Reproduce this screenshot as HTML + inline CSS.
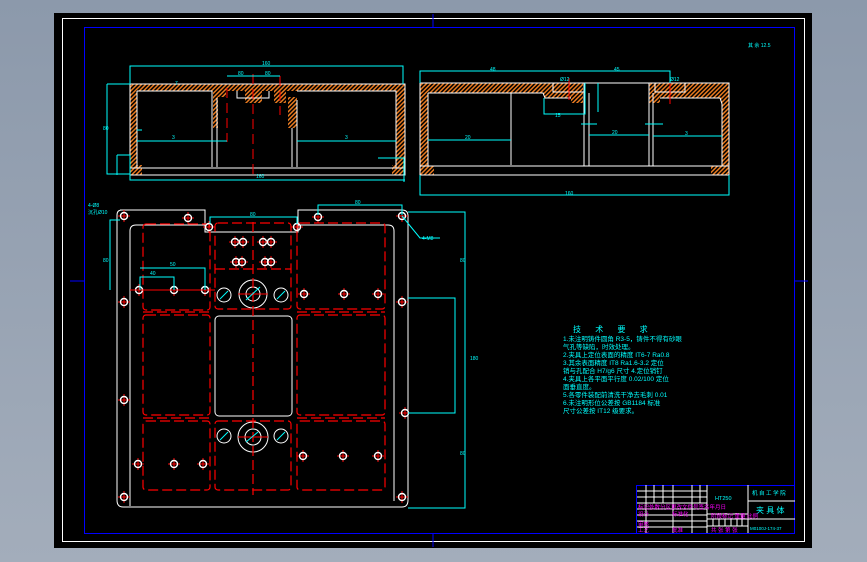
<!DOCTYPE html>
<html><head><meta charset="utf-8"><style>
html,body{margin:0;padding:0;width:867px;height:562px;overflow:hidden;background:linear-gradient(#8c99ab,#a3adbb);}
svg{position:absolute;left:0;top:0}
text{font-family:"Liberation Sans","Noto Sans CJK SC",sans-serif;}
</style></head><body>
<svg width="867" height="562" viewBox="0 0 867 562">
<defs>
<pattern id="h" width="3" height="3" patternUnits="userSpaceOnUse" patternTransform="rotate(45)">
<rect width="3" height="3" fill="#000"/><rect width="1.5" height="3" fill="#e87a20"/></pattern>
<g id="x"><line x1="-6" y1="0" x2="6" y2="0" stroke="#f00"/><line x1="0" y1="-6" x2="0" y2="6" stroke="#f00"/><circle r="3.5" fill="none" stroke="#fff" stroke-width="1.4"/></g>
</defs>
<rect x="54" y="13" width="758" height="535" fill="#000"/>
<rect x="62.5" y="18.5" width="742" height="523" fill="none" stroke="#fff"/>
<rect x="84.5" y="27.5" width="710" height="506" fill="none" stroke="#0000ff"/>
<g stroke="#00f"><line x1="433" y1="14" x2="433" y2="27"/><line x1="433" y1="534" x2="433" y2="547"/><line x1="70" y1="281" x2="84" y2="281"/><line x1="795" y1="281" x2="808" y2="281"/></g>

<!-- left section -->
<g>
<path d="M130 84 H405 V175 H130Z" fill="url(#h)"/>
<path d="M137 91 H213 V128 H218 V97 H226 V91 H245 V103 H262 V91 H274 V103 H286 V91 H297 V97 H288 V128 H297 V91 H396 V165 H137Z" fill="#000"/>
<rect x="130" y="165" width="275" height="10" fill="#000"/>
<rect x="130" y="165" width="12" height="10" fill="url(#h)"/>
<rect x="392" y="165" width="13" height="10" fill="url(#h)"/>
<g fill="none" stroke="#fff" stroke-width="1">
<path d="M130 84 H405 V175 H130Z"/>
<path d="M137 91 H212 V128 M217 128 V98 M137 91 V168 H396 V91 H297"/>
<line x1="130" y1="168" x2="405" y2="168"/>
<line x1="212" y1="128" x2="212" y2="167"/><line x1="217" y1="128" x2="217" y2="167"/>
<line x1="292" y1="128" x2="292" y2="167"/><line x1="297" y1="100" x2="297" y2="167"/>
<path d="M237 91 V98 H269 V91"/>
</g>
<g stroke="#f00" stroke-dasharray="10 5"><line x1="253" y1="74" x2="253" y2="175"/><line x1="227" y1="88" x2="227" y2="142"/><line x1="280" y1="76" x2="280" y2="115"/></g>
<g stroke="#0ff" fill="none">
<path d="M130 84 V66 H403 V84"/><path d="M107 84 V174 H130"/><path d="M107 84 H130"/>
<path d="M227 76 H280"/><path d="M137 141 H227"/><path d="M137 130 H142"/>
<path d="M117 155 H130 V180 H405"/><path d="M117 155 V175"/>
<path d="M297 141 H396"/><path d="M378 158 H404 V182"/>
</g>
<g fill="#0ff" font-size="5"><text x="262" y="65">160</text><text x="238" y="75">80</text><text x="265" y="75">80</text><text x="103" y="130">80</text><text x="256" y="178">160</text><text x="172" y="139">3</text><text x="345" y="139">3</text><text x="175" y="85">7</text></g>
</g>

<!-- right section -->
<g>
<path d="M420 83 H729 V175 H420Z" fill="url(#h)"/>
<path d="M428 93 H543 L545 98 H571 V103 H583 V83 H649 V103 H660 V98 H720 L722 104 V166 H428Z" fill="#000"/>
<rect x="420" y="166" width="309" height="9" fill="#000"/>
<rect x="420" y="166" width="14" height="9" fill="url(#h)"/>
<rect x="711" y="166" width="18" height="9" fill="url(#h)"/>
<g fill="none" stroke="#fff">
<path d="M420 83 H729 V175 H420Z"/><path d="M428 93 V166 H722 V104 L720 98 H660"/>
<path d="M428 93 H543 L545 98 H571"/><line x1="420" y1="166" x2="729" y2="166"/>
<line x1="511" y1="93" x2="511" y2="165"/><line x1="584" y1="83" x2="584" y2="166"/><line x1="589" y1="93" x2="589" y2="166"/>
<line x1="649" y1="83" x2="649" y2="166"/><line x1="653" y1="93" x2="653" y2="166"/>
<rect x="553" y="83" width="31" height="9"/><rect x="655" y="83" width="30" height="9"/>
</g>
<g stroke="#f00"><line x1="569" y1="78" x2="569" y2="100"/><line x1="670" y1="78" x2="670" y2="104"/></g>
<g stroke="#0ff" fill="none">
<path d="M420 83 V71 H670 V83"/><path d="M420 175 V195 H729 V175"/><path d="M428 140 H511"/><path d="M589 135 H649"/><path d="M653 136 H722"/>
<path d="M544 98 V114 H585 V83"/><path d="M581 124 H597 M645 124 H663"/><path d="M598 83 V112"/>
</g>
<g fill="#0ff" font-size="5"><text x="490" y="71">48</text><text x="614" y="71">45</text><text x="565" y="195">160</text><text x="465" y="139">20</text><text x="612" y="134">20</text><text x="685" y="135">3</text><text x="555" y="117">15</text><text x="560" y="81">Ø12</text><text x="670" y="81">Ø12</text><text x="748" y="47">其 余 12.5</text></g>
</g>

<!-- plan view -->
<g>
<g fill="none" stroke="#fff">
<path d="M120 210 H205 V232 H298 V210 H402 Q408 210 408 216 V500 Q408 507 402 507 H123 Q117 507 117 500 V215 Q117 210 122 210Z"/>
<path d="M136 225 H205 M298 225 H388 Q394 225 394 231 V501 M130 506 V231 Q130 225 136 225"/>
<rect x="215" y="316" width="77" height="100" rx="4"/>
<circle cx="253" cy="294" r="14"/><circle cx="253" cy="294" r="7"/>
<circle cx="253" cy="437" r="15"/><circle cx="253" cy="437" r="8"/>
<circle cx="224" cy="295" r="7"/><circle cx="281" cy="295" r="7"/>
<circle cx="224" cy="436" r="7"/><circle cx="281" cy="436" r="7"/>
</g>
<g fill="none" stroke="#f00" stroke-width="1.2" stroke-dasharray="10 4">
<rect x="143" y="224" width="67" height="86" rx="3"/><rect x="215" y="223" width="76" height="86" rx="3"/><rect x="297" y="223" width="88" height="86" rx="3"/>
<rect x="143" y="315" width="67" height="100" rx="3"/><rect x="297" y="315" width="88" height="100" rx="3"/>
<rect x="143" y="421" width="67" height="69" rx="3"/><rect x="215" y="421" width="76" height="69" rx="3"/><rect x="297" y="421" width="88" height="69" rx="3"/>
<line x1="253" y1="222" x2="253" y2="495"/><line x1="215" y1="269" x2="291" y2="269"/>
<line x1="143" y1="312" x2="210" y2="312"/><line x1="297" y1="312" x2="385" y2="312"/>
<line x1="143" y1="418" x2="210" y2="418"/><line x1="297" y1="418" x2="385" y2="418"/>
</g>
<g>
<use href="#x" x="124" y="216"/><use href="#x" x="188" y="218"/><use href="#x" x="209" y="227"/><use href="#x" x="297" y="227"/><use href="#x" x="318" y="217"/><use href="#x" x="402" y="216"/>
<use href="#x" x="124" y="302"/><use href="#x" x="402" y="302"/><use href="#x" x="124" y="400"/><use href="#x" x="405" y="413"/><use href="#x" x="124" y="497"/><use href="#x" x="402" y="497"/>
<use href="#x" x="139" y="290"/><use href="#x" x="174" y="290"/><use href="#x" x="205" y="290"/>
<use href="#x" x="304" y="294"/><use href="#x" x="344" y="294"/><use href="#x" x="378" y="294"/>
<use href="#x" x="138" y="464"/><use href="#x" x="174" y="464"/><use href="#x" x="203" y="464"/>
<use href="#x" x="303" y="456"/><use href="#x" x="343" y="456"/><use href="#x" x="378" y="456"/>
<use href="#x" x="235" y="242"/><use href="#x" x="243" y="242"/><use href="#x" x="263" y="242"/><use href="#x" x="271" y="242"/>
<use href="#x" x="236" y="262"/><use href="#x" x="242" y="262"/><use href="#x" x="265" y="262"/><use href="#x" x="271" y="262"/>
</g>
<g stroke="#f00"><line x1="130" y1="290" x2="215" y2="290"/><line x1="238" y1="294" x2="268" y2="294"/><line x1="238" y1="437" x2="268" y2="437"/></g>
<g stroke="#0ff" fill="none">
<path d="M110 290 V220 H120"/><path d="M140 290 V277 H174 V290"/><path d="M140 268 H205 V290"/>
<path d="M318 215 V205 H402 V215"/><path d="M210 224 V217 H297 V224"/>
<path d="M408 212 H465 V508 H408"/><path d="M408 298 H455 V413 H408"/>
<line x1="246" y1="300" x2="260" y2="287"/><line x1="246" y1="442" x2="258" y2="432"/>
<line x1="220" y1="299" x2="228" y2="291"/><line x1="277" y1="299" x2="285" y2="291"/>
<line x1="220" y1="440" x2="228" y2="432"/><line x1="277" y1="440" x2="285" y2="432"/>
<path d="M402 216 L420 238 H440"/>
</g>
<g fill="#0ff" font-size="5"><text x="88" y="207">4-Ø8</text><text x="88" y="214">沉孔Ø10</text><text x="103" y="262">80</text><text x="150" y="275">40</text><text x="170" y="266">50</text><text x="250" y="216">80</text><text x="355" y="204">80</text><text x="422" y="240">4-M8</text><text x="470" y="360">180</text><text x="460" y="455">80</text><text x="460" y="262">80</text></g>
</g>

<!-- tech requirements -->
<g fill="#0ff" font-size="6.5">
<text x="573" y="332" font-size="8" letter-spacing="6">技 术 要 求</text>
<text x="563" y="341">1.未注明铸件圆角 R3-5，铸件不得有砂眼</text>
<text x="563" y="349">气孔等缺陷，时效处理。</text>
<text x="563" y="357">2.夹具上定位表面的精度 IT6-7 Ra0.8</text>
<text x="563" y="365">3.其余表面精度 IT8 Ra1.6-3.2 定位</text>
<text x="563" y="373">销与孔配合 H7/g6 尺寸 4.定位销钉</text>
<text x="563" y="381">4.夹具上各平面平行度 0.02/100 定位</text>
<text x="563" y="389">面垂直度。</text>
<text x="563" y="397">5.各零件装配前清洗干净去毛刺 0.01</text>
<text x="563" y="405">6.未注明形位公差按 GB1184 标准</text>
<text x="563" y="413">尺寸公差按 IT12 级要求。</text>
</g>

<!-- title block -->
<g fill="none" stroke="#fff" stroke-width="1">
<rect x="636.5" y="485.5" width="158" height="48" stroke="#00f"/>
<path d="M637 491 H707 M637 497 H707 M637 503 H707 M637 509 H707 M637 515 H707 M637 521 H707 M637 527 H707"/>
<path d="M646 485 V533 M654 485 V503 M663 485 V503 M673 485 V533 M692 485 V533 M700 485 V503 M707 485 V533 M748 485 V533"/>
<path d="M707 514 H748 M707 519 H748 M707 526 H748 M748 501 H795 M748 519 H795"/>
<path d="M713 519 V526 M719 519 V526 M725 519 V526 M731 519 V526 M737 519 V526 M742 514 V526"/>
</g>
<g font-size="5.5"><text x="715" y="500" fill="#0ff">HT250</text><text x="752" y="495" fill="#0ff">机 自 工 学 院</text><text x="756" y="513" fill="#0ff" font-size="8">夹 具 体</text><text x="750" y="530" fill="#0ff" font-size="4.5">M0100J-174-37</text>
<text x="638" y="509" fill="#f0f">标记处数分区更改文件号签名年月日</text><text x="638" y="516" fill="#f0f">设计</text><text x="672" y="516" fill="#f0f">标准化</text><text x="711" y="518" fill="#f0f">阶段标记 重量 比例</text><text x="638" y="526" fill="#f0f">审核</text><text x="638" y="532" fill="#f0f">工艺</text><text x="672" y="532" fill="#f0f">批准</text><text x="711" y="532" fill="#f0f">共 张 第 张</text></g>
</svg>
</body></html>
